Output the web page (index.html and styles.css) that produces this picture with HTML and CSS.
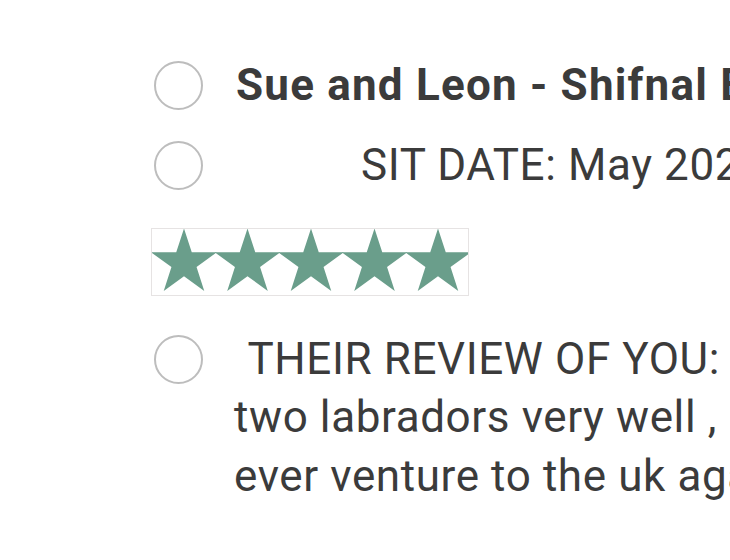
FILE: index.html
```html
<!DOCTYPE html>
<html>
<head>
<meta charset="utf-8">
<link rel="stylesheet" href="styles.css">
</head>
<body>
<div class="note">
  <div class="row row-title">
    <span class="check"></span>
    <span class="text bold">Sue and Leon - Shifnal England</span>
  </div>
  <div class="row row-date">
    <span class="check"></span>
    <span class="text caps indent">SIT DATE: May 2024</span>
  </div>
  <div class="stars">
    <svg width="318" height="66" viewBox="0 0 318 66">
      <defs>
        <polygon id="st" points="0,-34.5 7.76,-10.68 32.81,-10.66 12.55,4.08 20.28,27.91 0,13.2 -20.28,27.91 -12.55,4.08 -32.81,-10.66 -7.76,-10.68"/>
      </defs>
      <g fill="#6a9e8b">
        <use href="#st" x="32" y="36"/>
        <use href="#st" x="95.5" y="36"/>
        <use href="#st" x="159" y="36"/>
        <use href="#st" x="222.5" y="36"/>
        <use href="#st" x="286" y="36"/>
      </g>
    </svg>
  </div>
  <div class="row row-review">
    <span class="check"></span>
    <span class="text caps">&nbsp;THEIR REVIEW OF YOU: Lovely</span>
  </div>
  <div class="line">two labradors very well , and</div>
  <div class="line">ever venture to the uk again</div>
</div>
</body>
</html>
```
FILE: styles.css
```css
html, body {
  margin: 0;
  padding: 0;
  background: #ffffff;
  overflow: hidden;
}
body {
  width: 730px;
  height: 560px;
  font-family: Roboto, "Noto Sans", sans-serif;
  color: #3b3b3b;
  font-size: 44px;
}
.note {
  padding: 56px 0 0 154px;
  display: flex;
  flex-direction: column;
  white-space: nowrap;
}
.row {
  display: flex;
  align-items: center;
  height: 58px;
  gap: 33px;
}
.row-date {
  margin-top: 22px;
}
.check {
  flex: none;
  width: 45px;
  height: 45px;
  border: 2px solid #bdbdbd;
  border-radius: 50%;
}
.text {
  line-height: 58px;
}
.bold {
  font-weight: 700;
  letter-spacing: 1.2px;
}
.caps {
  letter-spacing: 0.6px;
}
.indent {
  padding-left: 125px;
}
.stars {
  margin: 34px 0 0 -3px;
  width: 316px;
  height: 66px;
  border: 1px solid #e6e3e3;
  overflow: hidden;
}
.stars svg {
  display: block;
  margin-top: -2px;
  filter: blur(0.6px);
}
.row-review {
  margin-top: 34px;
}
.line {
  padding-left: 80px;
  line-height: 59px;
  letter-spacing: 0.6px;
}
```
